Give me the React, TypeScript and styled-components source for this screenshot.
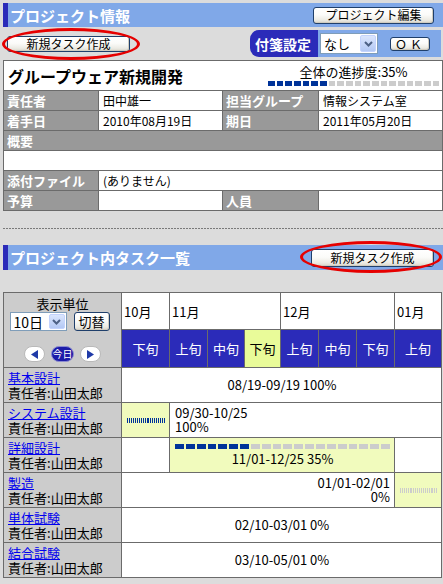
import React from "react";
import styled, { createGlobalStyle } from "styled-components";

const C = {
  bg: "#dcdcdc",
  barBlue: "#80a8e8",
  navy: "#2b2bb9",
  label: "#999999",
  side: "#cccccc",
  line: "#6b6b6b",
  todayHead: "#e9fb99",
  active: "#f1fbbd",
  seg: "#003399",
  segOff: "#cccccc",
  link: "#0000ee",
};

const GlobalStyle = createGlobalStyle`
  html, body { margin: 0; padding: 0; background: ${C.bg}; }
  body {
    font-family: "Noto Sans CJK JP", "Noto Sans", sans-serif;
    color: #000;
    font-size: 12px;
  }
  * { box-sizing: border-box; }
`;

const Page = styled.main`
  width: 443px;
  padding: 3px 0 5px 3px;
`;

const SectionBar = styled.header<{ $h: number; $mt: number }>`
  height: ${(p) => p.$h}px;
  margin-top: ${(p) => p.$mt}px;
  background: ${C.barBlue};
  border-left: 5px solid ${C.navy};
  display: flex;
  align-items: center;
  justify-content: space-between;
  padding: 0 9px 0 2px;
`;

const SectionTitle = styled.h2`
  margin: 0;
  font-size: 15px;
  font-weight: bold;
  color: #fff;
  line-height: 1;
`;

const XPButton = styled.button<{ $w: number; $h: number; $fs?: number; $ls?: number }>`
  width: ${(p) => p.$w}px;
  height: ${(p) => p.$h}px;
  padding: 0;
  font-family: inherit;
  font-size: ${(p) => p.$fs ?? 12}px;
  letter-spacing: ${(p) => p.$ls ?? 0}px;
  line-height: 1;
  color: #000;
  border: 1px solid #1f3f6b;
  border-radius: 3px;
  background: linear-gradient(#ffffff 0%, #fbfbf9 45%, #ecebe4 80%, #d9d5c9 100%);
  box-shadow: inset -1px -1px 0 #d0ccc0;
  display: inline-flex;
  align-items: center;
  justify-content: center;
`;

const ActionRow = styled.div`
  height: 33px;
  display: flex;
  align-items: center;
  justify-content: space-between;
  padding: 0 2px 0 4px;
`;

const Annotated = styled.span`
  position: relative;
  display: inline-flex;
`;

const Ellipse = styled.span<{ $l: number; $t: number; $r: number; $b: number }>`
  position: absolute;
  left: ${(p) => p.$l}px;
  top: ${(p) => p.$t}px;
  right: ${(p) => p.$r}px;
  bottom: ${(p) => p.$b}px;
  border: 3px solid #e60000;
  border-radius: 50%;
  pointer-events: none;
`;

const FusenPanel = styled.div`
  display: flex;
  height: 27px;
`;

const FusenLabel = styled.div`
  width: 68px;
  background: ${C.navy};
  color: #fff;
  font-weight: bold;
  font-size: 14px;
  border-radius: 9px 0 0 9px;
  display: flex;
  align-items: center;
  padding-left: 5px;
`;

const FusenControls = styled.div`
  width: 123px;
  background: ${C.barBlue};
  display: flex;
  align-items: center;
  gap: 12px;
  padding-left: 2px;
`;

const SelectFrame = styled.span<{ $w: number; $h: number }>`
  width: ${(p) => p.$w}px;
  height: ${(p) => p.$h}px;
  display: inline-flex;
  align-items: stretch;
  background: #fff;
  border: 1px solid #7f9db9;
`;

const SelectValue = styled.span<{ $fs: number }>`
  flex: 1;
  display: flex;
  align-items: center;
  padding-left: 3px;
  font-size: ${(p) => p.$fs}px;
  line-height: 1;
`;

const SelectArrow = styled.span`
  width: 16px;
  margin: 1px;
  border-radius: 2px;
  background: linear-gradient(#dbe6fd, #b3c8f4);
  border: 1px solid #c3d3fd;
  display: flex;
  align-items: center;
  justify-content: center;
`;

function Dropdown({ value, w, h, fs }: { value: string; w: number; h: number; fs: number }) {
  return (
    <SelectFrame $w={w} $h={h} role="combobox" aria-label={value}>
      <SelectValue $fs={fs}>{value}</SelectValue>
      <SelectArrow>
        <svg width="9" height="6" viewBox="0 0 9 6">
          <polyline points="1,1 4.5,4.5 8,1" fill="none" stroke="#4d6185" strokeWidth="2" />
        </svg>
      </SelectArrow>
    </SelectFrame>
  );
}

const BarTrack = styled.div<{ $gap: number; $h: number; $w?: number }>`
  display: flex;
  gap: ${(p) => p.$gap}px;
  height: ${(p) => p.$h}px;
  width: ${(p) => (p.$w ? `${p.$w}px` : "100%")};
`;

const Seg = styled.span<{ $on: boolean }>`
  flex: 1;
  background: ${(p) => (p.$on ? C.seg : C.segOff)};
`;

function ProgressBar({ value, gap, h, w }: { value: number; gap: number; h: number; w?: number }) {
  const on = Math.round((value / 100) * 20);
  return (
    <BarTrack $gap={gap} $h={h} $w={w}>
      {Array.from({ length: 20 }, (_, i) => (
        <Seg key={i} $on={i < on} />
      ))}
    </BarTrack>
  );
}

/* ---------- project info table ---------- */

const InfoTable = styled.table`
  width: 439px;
  border-collapse: collapse;
  table-layout: fixed;
  background: #fff;
`;

const Col = styled.col<{ $w: number }>`
  width: ${(p) => p.$w}px;
`;

const TitleCell = styled.td`
  height: 30px;
  border: 1px solid ${C.line};
  padding: 0 3px 0 4px;
`;

const TitleInner = styled.div`
  display: flex;
  align-items: center;
  justify-content: space-between;
`;

const ProjectName = styled.h1`
  margin: 0;
  font-size: 16px;
  font-weight: bold;
  line-height: 1;
`;

const Overall = styled.div`
  display: flex;
  flex-direction: column;
  align-items: center;
  gap: 2px;
`;

const OverallText = styled.span`
  font-size: 13px;
  line-height: 14px;
`;

const Label = styled.th`
  height: 20px;
  border: 1px solid ${C.line};
  background: ${C.label};
  color: #fff;
  font-weight: bold;
  font-size: 13px;
  text-align: left;
  padding: 0 3px;
  line-height: 1;
`;

const Value = styled.td`
  height: 20px;
  border: 1px solid ${C.line};
  background: #fff;
  font-size: 12px;
  padding: 0 4px;
  line-height: 1;
`;

const Separator = styled.hr`
  margin: 17px 0 0;
  border: 0;
  height: 1px;
  background: repeating-linear-gradient(90deg, #7a7a7a 0 2px, transparent 2px 3px);
`;

/* ---------- gantt ---------- */

const Gantt = styled.table`
  margin-top: 22px;
  width: 438px;
  border-collapse: collapse;
  table-layout: fixed;
  font-size: 13px;
`;

const SideHead = styled.th`
  border: 1px solid ${C.line};
  background: ${C.side};
  padding: 0;
  vertical-align: top;
  font-weight: normal;
`;

const SideHeadInner = styled.div`
  height: 74px;
  display: flex;
  flex-direction: column;
  align-items: center;
  padding-top: 3px;
`;

const UnitLabel = styled.span`
  font-size: 13px;
  line-height: 15px;
`;

const ControlRow = styled.div`
  margin-top: 1px;
  display: flex;
  gap: 7px;
  padding-right: 6px;
`;

const NavRow = styled.div`
  margin-top: 15px;
  display: flex;
  gap: 6px;
`;

const NavPill = styled.button`
  width: 21px;
  height: 16px;
  padding: 0;
  border-radius: 8px;
  border: 1px solid #b9b9b9;
  background: #fff;
  display: flex;
  align-items: center;
  justify-content: center;
`;

const TodayPill = styled.button`
  width: 23px;
  height: 16px;
  padding: 0;
  border-radius: 8px;
  border: 1px solid #8c8cd0;
  background: #1c1ca8;
  color: #fff;
  font-family: inherit;
  font-size: 10px;
  line-height: 1;
  display: flex;
  align-items: center;
  justify-content: center;
`;

const MonthRow = styled.tr`
  height: 37px;
`;

const TermRow = styled.tr`
  height: 38px;
`;

const MonthCell = styled.th`
  border: 1px solid ${C.line};
  background: #fff;
  font-weight: normal;
  font-size: 13px;
  text-align: left;
  padding: 0 2px;
`;

const TermCell = styled.th<{ $today?: boolean }>`
  border: 1px solid ${C.line};
  background: ${(p) => (p.$today ? C.todayHead : C.navy)};
  color: ${(p) => (p.$today ? "#000" : "#fff")};
  font-weight: normal;
  font-size: 13px;
  text-align: center;
  padding: 0;
`;

const TaskRow = styled.tr`
  height: 35px;
`;

const TaskCell = styled.th`
  border: 1px solid ${C.line};
  background: ${C.side};
  font-weight: normal;
  text-align: left;
  padding: 0 4px;
  font-size: 13px;
  line-height: 15px;
`;

const TaskLink = styled.a`
  color: ${C.link};
  text-decoration: underline;
  display: block;
`;

const TaskOwner = styled.span`
  display: block;
`;

const BarCell = styled.td<{ $active?: boolean; $align: string }>`
  border: 1px solid ${C.line};
  background: ${(p) => (p.$active ? C.active : "#fff")};
  text-align: ${(p) => p.$align};
  padding: 0 4px 0 5px;
  font-size: 13px;
  line-height: 14px;
  vertical-align: middle;
`;

const BarWrap = styled.div<{ $mb: number }>`
  margin-bottom: ${(p) => p.$mb}px;
`;

const CellLine = styled.div``;

type GCell = {
  span: number;
  active?: boolean;
  align?: "left" | "center" | "right";
  lines?: string[];
  bar?: number;
  gap?: number;
};

type Task = { name: string; owner: string; cells: GCell[] };

const tasks: Task[] = [
  { name: "基本設計", owner: "山田太郎", cells: [{ span: 8, align: "center", lines: ["08/19-09/19 100%"] }] },
  {
    name: "システム設計",
    owner: "山田太郎",
    cells: [
      { span: 1, active: true, bar: 100, gap: 1 },
      { span: 7, align: "left", lines: ["09/30-10/25", "100%"] },
    ],
  },
  {
    name: "詳細設計",
    owner: "山田太郎",
    cells: [
      { span: 1 },
      { span: 6, active: true, bar: 35, gap: 2, align: "center", lines: ["11/01-12/25 35%"] },
      { span: 1 },
    ],
  },
  {
    name: "製造",
    owner: "山田太郎",
    cells: [
      { span: 7, align: "right", lines: ["01/01-02/01", "0%"] },
      { span: 1, active: true, bar: 0, gap: 1 },
    ],
  },
  { name: "単体試験", owner: "山田太郎", cells: [{ span: 8, align: "center", lines: ["02/10-03/01 0%"] }] },
  { name: "結合試験", owner: "山田太郎", cells: [{ span: 8, align: "center", lines: ["03/10-05/01 0%"] }] },
];

const terms: { label: string; today?: boolean }[] = [
  { label: "下旬" },
  { label: "上旬" },
  { label: "中旬" },
  { label: "下旬", today: true },
  { label: "上旬" },
  { label: "中旬" },
  { label: "下旬" },
  { label: "上旬" },
];

const ganttCols = [118, 48, 38, 37, 36, 38, 38, 38, 47];

export default function App() {
  return (
    <>
      <GlobalStyle />
      <Page>
        <SectionBar $h={24} $mt={0}>
          <SectionTitle>プロジェクト情報</SectionTitle>
          <XPButton $w={121} $h={17}>プロジェクト編集</XPButton>
        </SectionBar>

        <ActionRow>
          <Annotated>
            <XPButton $w={123} $h={16}>新規タスク作成</XPButton>
            <Ellipse $l={-5} $t={-8} $r={-10} $b={-8} />
          </Annotated>
          <FusenPanel>
            <FusenLabel>付箋設定</FusenLabel>
            <FusenControls>
              <Dropdown value="なし" w={58} h={21} fs={13} />
              <XPButton $w={40} $h={14} $ls={3}>ＯＫ</XPButton>
            </FusenControls>
          </FusenPanel>
        </ActionRow>

        <InfoTable>
          <colgroup>
            <Col $w={95} />
            <Col $w={124} />
            <Col $w={96} />
            <Col $w={124} />
          </colgroup>
          <tbody>
            <tr>
              <TitleCell colSpan={4}>
                <TitleInner>
                  <ProjectName>グループウェア新規開発</ProjectName>
                  <Overall>
                    <OverallText>全体の進捗度:35%</OverallText>
                    <ProgressBar value={35} gap={2} h={5} w={171} />
                  </Overall>
                </TitleInner>
              </TitleCell>
            </tr>
            <tr>
              <Label>責任者</Label>
              <Value>田中雄一</Value>
              <Label>担当グループ</Label>
              <Value>情報システム室</Value>
            </tr>
            <tr>
              <Label>着手日</Label>
              <Value>2010年08月19日</Value>
              <Label>期日</Label>
              <Value>2011年05月20日</Value>
            </tr>
            <tr>
              <Label colSpan={4}>概要</Label>
            </tr>
            <tr>
              <Value colSpan={4} />
            </tr>
            <tr>
              <Label>添付ファイル</Label>
              <Value colSpan={3}>(ありません)</Value>
            </tr>
            <tr>
              <Label>予算</Label>
              <Value />
              <Label>人員</Label>
              <Value />
            </tr>
          </tbody>
        </InfoTable>

        <Separator />

        <SectionBar $h={25} $mt={16}>
          <SectionTitle>プロジェクト内タスク一覧</SectionTitle>
          <Annotated>
            <XPButton $w={123} $h={18}>新規タスク作成</XPButton>
            <Ellipse $l={-11} $t={-8} $r={-8} $b={-6} />
          </Annotated>
        </SectionBar>

        <Gantt>
          <colgroup>
            {ganttCols.map((w, i) => (
              <Col key={i} $w={w} />
            ))}
          </colgroup>
          <thead>
            <MonthRow>
              <SideHead rowSpan={2}>
                <SideHeadInner>
                  <UnitLabel>表示単位</UnitLabel>
                  <ControlRow>
                    <Dropdown value="10日" w={57} h={19} fs={14} />
                    <XPButton $w={36} $h={19} $fs={13}>切替</XPButton>
                  </ControlRow>
                  <NavRow>
                    <NavPill aria-label="前へ">
                      <svg width="7" height="9" viewBox="0 0 7 9">
                        <polygon points="7,0 7,9 0,4.5" fill="#1f3aa8" />
                      </svg>
                    </NavPill>
                    <TodayPill>今日</TodayPill>
                    <NavPill aria-label="次へ">
                      <svg width="7" height="9" viewBox="0 0 7 9">
                        <polygon points="0,0 0,9 7,4.5" fill="#1f3aa8" />
                      </svg>
                    </NavPill>
                  </NavRow>
                </SideHeadInner>
              </SideHead>
              <MonthCell>10月</MonthCell>
              <MonthCell colSpan={3}>11月</MonthCell>
              <MonthCell colSpan={3}>12月</MonthCell>
              <MonthCell>01月</MonthCell>
            </MonthRow>
            <TermRow>
              {terms.map((t, i) => (
                <TermCell key={i} $today={t.today}>
                  {t.label}
                </TermCell>
              ))}
            </TermRow>
          </thead>
          <tbody>
            {tasks.map((t) => (
              <TaskRow key={t.name}>
                <TaskCell>
                  <TaskLink href="#">{t.name}</TaskLink>
                  <TaskOwner>責任者:{t.owner}</TaskOwner>
                </TaskCell>
                {t.cells.map((c, i) => (
                  <BarCell key={i} colSpan={c.span} $active={c.active} $align={c.align ?? "left"}>
                    {c.bar !== undefined && (
                      <BarWrap $mb={c.lines ? 3 : 0}>
                        <ProgressBar value={c.bar} gap={c.gap ?? 2} h={5} />
                      </BarWrap>
                    )}
                    {c.lines?.map((l) => (
                      <CellLine key={l}>{l}</CellLine>
                    ))}
                  </BarCell>
                ))}
              </TaskRow>
            ))}
          </tbody>
        </Gantt>
      </Page>
    </>
  );
}
